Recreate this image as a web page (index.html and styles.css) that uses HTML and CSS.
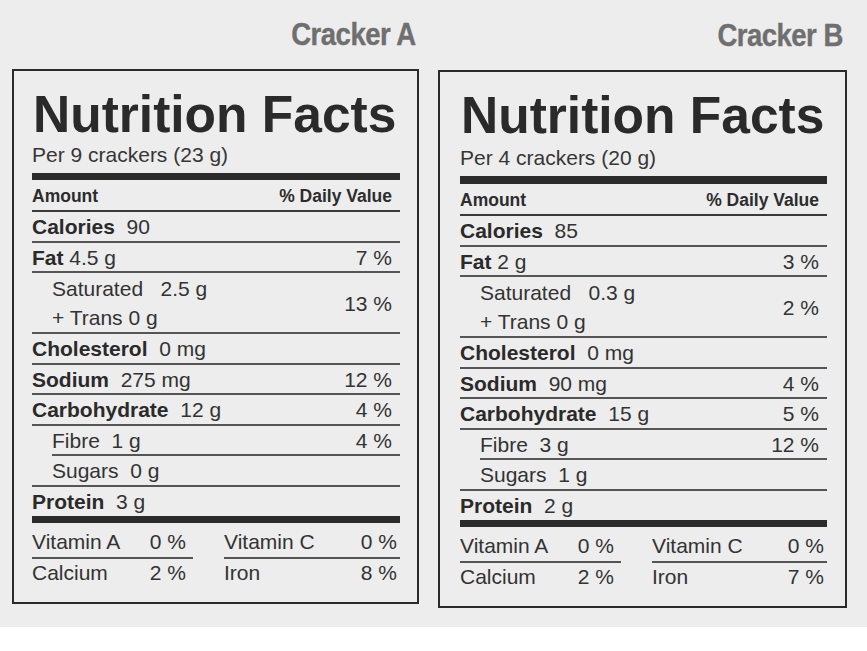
FILE: index.html
```html
<!DOCTYPE html>
<html lang="en">
<head>
<meta charset="utf-8">
<title>Nutrition Facts – Cracker A vs Cracker B</title>
<link rel="stylesheet" href="styles.css">
</head>
<body>
<main class="stage">
  <div class="col col-a">
    <div class="brand"><span class="brand-text">Cracker A</span></div>
    <section class="label label-a">
      <h1 class="title">Nutrition Facts</h1>
      <div class="serving">Per 9 crackers (23 g)</div>
      <div class="bar"></div>
      <div class="head"><span>Amount</span><span>% Daily Value</span></div>
      <div class="row"><span><b>Calories</b>&nbsp; 90</span></div>
      <div class="row"><span><b>Fat</b> 4.5 g</span><span>7 %</span></div>
      <div class="row sat"><div class="two"><div>Saturated&nbsp;&nbsp; 2.5 g</div><div>+ Trans 0 g</div></div><span>13 %</span></div>
      <div class="row"><span><b>Cholesterol</b>&nbsp; 0 mg</span></div>
      <div class="row"><span><b>Sodium</b>&nbsp; 275 mg</span><span>12 %</span></div>
      <div class="row"><span><b>Carbohydrate</b>&nbsp; 12 g</span><span>4 %</span></div>
      <div class="row sub"><span>Fibre&nbsp; 1 g</span><span>4 %</span></div>
      <div class="row sub-text"><span>Sugars&nbsp; 0 g</span></div>
      <div class="row last"><span><b>Protein</b>&nbsp; 3 g</span></div>
      <div class="bar bar-low"></div>
      <div class="vit">
        <div class="vcell vleft vtop"><span>Vitamin A</span><span>0 %</span></div>
        <div class="vcell vright vtop"><span>Vitamin C</span><span>0 %</span></div>
        <div class="vcell vleft"><span>Calcium</span><span>2 %</span></div>
        <div class="vcell vright"><span>Iron</span><span>8 %</span></div>
      </div>
    </section>
  </div>
  <div class="col col-b">
    <div class="brand brand-b"><span class="brand-text">Cracker B</span></div>
    <section class="label label-b">
      <h1 class="title">Nutrition Facts</h1>
      <div class="serving">Per 4 crackers (20 g)</div>
      <div class="bar"></div>
      <div class="head"><span>Amount</span><span>% Daily Value</span></div>
      <div class="row"><span><b>Calories</b>&nbsp; 85</span></div>
      <div class="row"><span><b>Fat</b> 2 g</span><span>3 %</span></div>
      <div class="row sat"><div class="two"><div>Saturated&nbsp;&nbsp; 0.3 g</div><div>+ Trans 0 g</div></div><span>2 %</span></div>
      <div class="row"><span><b>Cholesterol</b>&nbsp; 0 mg</span></div>
      <div class="row"><span><b>Sodium</b>&nbsp; 90 mg</span><span>4 %</span></div>
      <div class="row"><span><b>Carbohydrate</b>&nbsp; 15 g</span><span>5 %</span></div>
      <div class="row sub"><span>Fibre&nbsp; 3 g</span><span>12 %</span></div>
      <div class="row sub-text"><span>Sugars&nbsp; 1 g</span></div>
      <div class="row last"><span><b>Protein</b>&nbsp; 2 g</span></div>
      <div class="bar bar-low"></div>
      <div class="vit">
        <div class="vcell vleft vtop"><span>Vitamin A</span><span>0 %</span></div>
        <div class="vcell vright vtop"><span>Vitamin C</span><span>0 %</span></div>
        <div class="vcell vleft"><span>Calcium</span><span>2 %</span></div>
        <div class="vcell vright"><span>Iron</span><span>7 %</span></div>
      </div>
    </section>
  </div>
</main>
</body>
</html>
```
FILE: styles.css
```css
html, body {
  margin: 0;
  padding: 0;
  background: #ffffff;
}

body {
  font-family: "Liberation Sans", Arial, Helvetica, sans-serif;
  color: #333333;
}

.stage {
  box-sizing: border-box;
  height: 627px;
  background: #ededed;
  display: flex;
  align-items: flex-start;
  gap: 19px;
  padding-left: 12px;
}

.col {
  display: flex;
  flex-direction: column;
}

.col-a { width: 407px; }
.col-b { width: 409px; }

.brand {
  font-family: "Liberation Sans", Arial, sans-serif;
  font-weight: 700;
  font-size: 32px;
  line-height: 36px;
  color: #6f6f6f;
  text-align: right;
  padding-right: 3px;
  margin-top: 16px;
  margin-bottom: 17px;
  white-space: nowrap;
}

.brand-text {
  display: inline-block;
  transform: scaleX(0.86);
  transform-origin: right center;
  letter-spacing: -0.6px;
  -webkit-text-stroke: 0.4px #6f6f6f;
}

.brand-b {
  margin-top: 17px;
  padding-right: 4px;
}

.label {
  box-sizing: border-box;
  border: 2px solid #2b2b2b;
  padding: 17px 17px 14px 18px;
}

.label-b {
  padding: 17px 18px 14px 20px;
}

.title {
  margin: 0;
  padding-left: 1px;
  font-size: 51.5px;
  line-height: 52px;
  font-weight: 700;
  color: #2a2a2a;
  white-space: nowrap;
}

.serving {
  margin-top: 3px;
  font-size: 21px;
  line-height: 24px;
  color: #363636;
}

.label-b .serving {
  margin-top: 5px;
}

.bar {
  height: 7px;
  background: #2b2b2b;
  margin-top: 6px;
}

.label-b .bar {
  height: 8px;
}

.bar-low {
  margin-top: 1px;
}

.label-b .bar-low {
  height: 7px;
}

.head {
  display: flex;
  justify-content: space-between;
  font-size: 17.5px;
  font-weight: 700;
  line-height: 28px;
  padding-top: 2px;
  padding-right: 8px;
  color: #2c2c2c;
  border-bottom: 2px solid #3a3a3a;
}

.row {
  display: flex;
  justify-content: space-between;
  align-items: center;
  font-size: 21px;
  line-height: 26.5px;
  padding-top: 2px;
  padding-right: 8px;
  border-bottom: 2px solid #555555;
  white-space: nowrap;
}

.row b {
  font-weight: 700;
  color: #2a2a2a;
}

.row.sat {
  padding-top: 1px;
  padding-bottom: 0;
  padding-left: 20px;
  line-height: 29px;
}

.row.sub {
  margin-left: 20px;
}

.row.sub-text {
  padding-left: 20px;
}

.row.last {
  border-bottom: none;
}

.vit {
  display: grid;
  grid-template-columns: 161px 1fr;
  column-gap: 31px;
  padding-top: 4px;
}

.vcell {
  display: flex;
  justify-content: space-between;
  font-size: 21px;
  line-height: 30px;
  white-space: nowrap;
}

.vleft { padding-right: 7px; }
.vright { padding-right: 3px; }

.vtop {
  border-bottom: 2px solid #555555;
}

.vit .vcell:nth-child(n+3) {
  margin-top: -1px;
}
```
